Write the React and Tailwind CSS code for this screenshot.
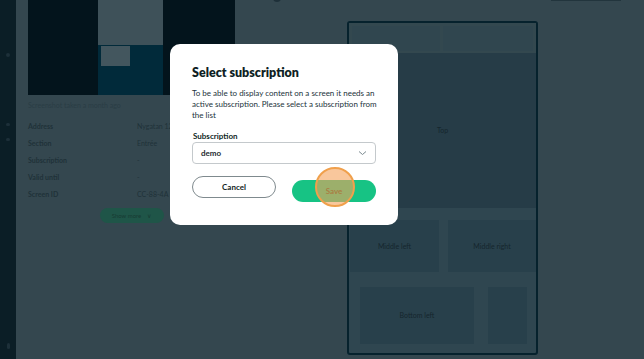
import React from 'react';

const rows = [
  { label: 'Address', value: 'Nygatan 12' },
  { label: 'Section', value: 'Entrée' },
  { label: 'Subscription', value: '-' },
  { label: 'Valid until', value: '-' },
  { label: 'Screen ID', value: 'CC-88-4A' },
];

const App = () => {
  return (
    <div
      className="relative flex w-[644px] h-[359px] overflow-hidden bg-[#34474f]"
      style={{ fontFamily: 'Lato, "Noto Sans", sans-serif' }}
    >
      {/* Sidebar */}
      <aside className="w-[16px] shrink-0 bg-[#0b1e26] flex flex-col items-center">
        <div className="mt-[53px] w-[4px] h-[4px] rounded-full bg-[#1d3039]" />
        <div className="mt-[66px] w-[4px] h-[3px] rounded-full bg-[#1d3039]" />
        <div className="mt-[12px] w-[4px] h-[3px] rounded-full bg-[#1d3039]" />
        <div className="mt-auto mb-[10px] w-[3px] h-[6px] rounded-sm bg-[#1d3039]" />
      </aside>

      {/* Main */}
      <main className="flex-1 flex">
        {/* Left panel */}
        <section className="w-[219px] shrink-0 pl-[12px] flex flex-col">
          <div className="flex w-[207px] h-[95px]">
            <div className="w-[70px] bg-[#03141c]" />
            <div className="w-[65px] flex flex-col">
              <div className="h-[45px] bg-[#3e5159]" />
              <div className="flex-1 bg-[#012a3a]">
                <div className="w-[29px] h-[20px] ml-[3px] mt-[1px] bg-[#43565e]" />
              </div>
            </div>
            <div className="flex-1 bg-[#03141c]" />
          </div>
          <p className="mt-[6px] text-[7px] leading-[9px] text-[#2a3d45]">Screenshot taken a month ago</p>
          <div className="mt-[12px] flex flex-col gap-[8px]">
            {rows.map((r) => (
              <div key={r.label} className="flex text-[7px] leading-[9px] font-bold text-[#203239]">
                <span className="w-[109px]">{r.label}</span>
                <span className="font-normal">{r.value}</span>
              </div>
            ))}
          </div>
          <div className="mt-[9px] flex justify-center">
            <button className="w-[64px] h-[15px] rounded-full bg-[#1f5548] text-[6px] text-[#173b33] flex items-center justify-center gap-[6px]">
              Show more
              <span className="text-[6px]">∨</span>
            </button>
          </div>
        </section>

        {/* Right panel: layout preview */}
        <section className="flex-1 relative">
          <div className="absolute left-[38px] top-[-6px] w-[8px] h-[8px] rounded-full bg-[#1e3039]" />
          <div className="absolute left-[316px] top-[-1px] w-[70px] h-[2px] bg-[#22353d]" />
          <div className="ml-[112px] mt-[21px] w-[191px] h-[334px] rounded-[3px] border-2 border-[#06222d] bg-[#2f4650] flex flex-col">
            <div className="h-[30px] flex gap-[3px] px-[3px] pt-[3px] pb-[2px] bg-[#33484f]">
              <div className="w-[88px] bg-[#30464f]" />
              <div className="flex-1 bg-[#30464f]" />
            </div>
            <div className="h-[155px] bg-[#263c47] flex items-center justify-center text-[7px] text-[#15262d]">Top</div>
            <div className="mt-[12px] h-[52px] flex gap-[9px] pl-[1px]">
              <div className="w-[89px] bg-[#28404b] flex items-center justify-center text-[7px] text-[#15262d]">Middle left</div>
              <div className="flex-1 bg-[#28404b] flex items-center justify-center text-[7px] text-[#15262d]">Middle right</div>
            </div>
            <div className="mt-[15px] h-[57px] flex pl-[11px] pr-[9px] gap-[14px]">
              <div className="w-[114px] bg-[#28404b] flex items-center justify-center text-[7px] text-[#15262d]">Bottom left</div>
              <div className="flex-1 bg-[#28404b]" />
            </div>
          </div>
        </section>
      </main>

      {/* Modal */}
      <div className="absolute left-[170px] top-[44px] w-[228px] h-[181px] bg-white rounded-[10px] px-[22px] pt-[21px] text-[#0f1f24]">
        <h2 className="text-[12.5px] leading-[16px] font-extrabold">Select subscription</h2>
        <p className="mt-[7px] text-[8px] leading-[11px] text-[#22323a] whitespace-nowrap">
          To be able to display content on a screen it needs an
          <br />
          active subscription. Please select a subscription from
          <br />
          the list
        </p>
        <label className="block mt-[10px] text-[8px] leading-[10px] font-bold pl-[1px]">Subscription</label>
        <div className="mt-[1px] h-[22px] border border-[#c4c9cc] rounded-[4px] flex items-center justify-between px-[8px]">
          <span className="text-[8px] font-bold text-[#1d2b31]">demo</span>
          <svg width="9" height="6" viewBox="0 0 9 6" fill="none" stroke="#7b8a90" strokeWidth="1">
            <path d="M1 1.5 L4.5 4.5 L8 1.5" />
          </svg>
        </div>
        <div className="mt-[12px] flex justify-between">
          <button className="w-[84px] h-[22px] rounded-full border border-[#7f8a8e] text-[8px] font-bold text-[#111d22]">Cancel</button>
          <div className="relative">
            <button className="w-[84px] h-[22px] rounded-full bg-[#17c384] text-[8px] font-bold text-[#3a4a22]">Save</button>
            <div className="absolute left-[23px] top-[-9px] w-[40px] h-[40px] rounded-full border-2 border-[#f0a04c] bg-[#f5a15a]/60" />
          </div>
        </div>
      </div>
    </div>
  );
};

export default App;
